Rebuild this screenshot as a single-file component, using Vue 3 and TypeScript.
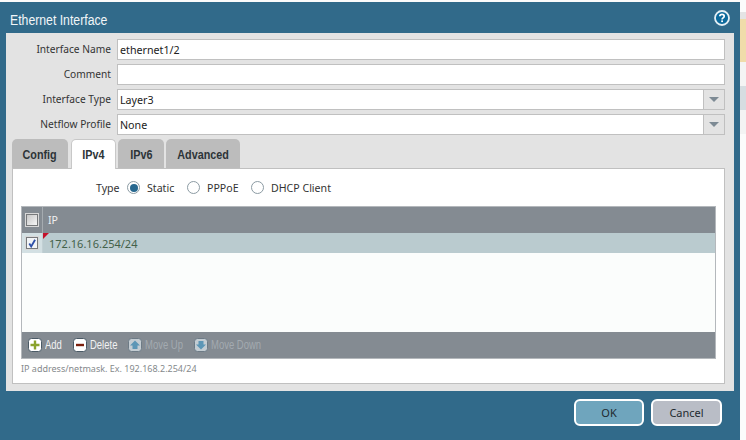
<script setup lang="ts">
const rows: { label: string; value: string; select?: boolean }[] = [
  { label: 'Interface Name', value: 'ethernet1/2' },
  { label: 'Comment', value: '' },
  { label: 'Interface Type', value: 'Layer3', select: true },
  { label: 'Netflow Profile', value: 'None', select: true },
]
const tabs = ['Config', 'IPv4', 'IPv6', 'Advanced']
const radios = ['Static', 'PPPoE', 'DHCP Client']
const strip = [
  { h: 12, c: '#fbfbfb' }, { h: 7, c: '#e4e4e4' }, { h: 43, c: '#f0dcaa' }, { h: 24, c: '#f4f4f4' },
  { h: 24, c: '#d6dde1' }, { h: 24, c: '#f3f3f3' }, { h: 306, c: '#fbfbfb' },
]
</script>

<template>
  <div class="page">
    <div class="left">
      <div class="topline"></div>
      <div class="dialog">
        <div class="header">
          <span class="title">Ethernet Interface</span>
          <svg class="help" width="16" height="16" viewBox="0 0 16 16">
            <circle cx="8" cy="8" r="7" fill="#0d6a9c" stroke="#e6f0f5" stroke-width="1.8" />
            <path d="M5.8 6.3C5.9 5 6.8 4.4 8 4.4c1.3 0 2.2.7 2.2 1.8 0 1.7-2.1 1.6-2.1 3.2" fill="none" stroke="#fff" stroke-width="1.7" />
            <rect x="7.2" y="10.4" width="1.8" height="1.7" fill="#fff" />
          </svg>
        </div>
        <div class="body">
          <div v-for="r in rows" :key="r.label" class="row">
            <label class="label">{{ r.label }}</label>
            <div class="input">
              <span class="value">{{ r.value }}</span>
              <span v-if="r.select" class="drop"><i class="arrow"></i></span>
            </div>
          </div>
          <div class="tabs">
            <div v-for="t in tabs" :key="t" class="tab" :class="{ active: t === 'IPv4' }"><span class="squeeze">{{ t }}</span></div>
          </div>
          <div class="panel">
            <div class="type-row">
              <span class="type-label">Type</span>
              <span v-for="(r, i) in radios" :key="r" class="radio-item">
                <i class="radio" :class="{ on: i === 0 }"></i>{{ r }}
              </span>
            </div>
            <div class="grid">
              <div class="grid-head">
                <div class="check-cell"><i class="box"></i></div>
                <div class="ip-head">IP</div>
              </div>
              <div class="grid-row">
                <div class="check-cell sel">
                  <i class="box checked">
                    <svg width="11" height="11" viewBox="0 0 11 11"><path d="M2.5 5.5L4.6 8.7 8.9 1.3" fill="none" stroke="#2d4fa8" stroke-width="2" /></svg>
                  </i>
                </div>
                <div class="ip-cell"><i class="flag"></i>172.16.16.254/24</div>
              </div>
              <div class="grid-empty"></div>
              <div class="toolbar">
                <span class="tool t1">
                  <svg class="ico" width="14" height="14" viewBox="0 0 14 14"><rect x=".5" y=".5" width="13" height="13" rx="3" fill="#fff" stroke="#4a5a66" /><path d="M7 2.5v9M2.5 7h9" stroke="#8aa32c" stroke-width="2.4" /></svg><span class="tool-text">Add</span>
                </span>
                <span class="tool t2">
                  <svg class="ico" width="14" height="14" viewBox="0 0 14 14"><rect x=".5" y=".5" width="13" height="13" rx="3" fill="#fff" stroke="#4a5a66" /><path d="M3 7h8" stroke="#7c1f0c" stroke-width="2.4" /></svg><span class="tool-text">Delete</span>
                </span>
                <span class="tool t3 off">
                  <svg class="ico" width="14" height="14" viewBox="0 0 14 14"><rect x=".5" y=".5" width="13" height="13" rx="3" fill="#c3ccd2" stroke="#6d7b86" /><path d="M7 2.5L12 7.5H9.5V11h-5V7.5H2z" fill="#5c96b6" /></svg><span class="tool-text">Move Up</span>
                </span>
                <span class="tool off">
                  <svg class="ico" width="14" height="14" viewBox="0 0 14 14"><rect x=".5" y=".5" width="13" height="13" rx="3" fill="#c3ccd2" stroke="#6d7b86" /><path d="M7 11.5L12 6.5H9.5V3h-5v3.5H2z" fill="#5c96b6" /></svg><span class="tool-text">Move Down</span>
                </span>
              </div>
            </div>
            <div class="hint">IP address/netmask. Ex. 192.168.2.254/24</div>
          </div>
        </div>
        <div class="footer">
          <button class="btn ok">OK</button>
          <button class="btn cancel">Cancel</button>
        </div>
      </div>
    </div>
    <div class="strip">
      <div v-for="(s, i) in strip" :key="i" :style="{ height: s.h + 'px', background: s.c }"></div>
    </div>
  </div>
</template>

<style>
html, body { margin: 0; padding: 0; background: #fbfbfb; }
</style>

<style scoped>
.page { display: flex; width: 746px; height: 440px; overflow: hidden; font-family: "Noto Sans", sans-serif; font-size: 11px; color: #333; }
.left { width: 740px; display: flex; flex-direction: column; }
.topline { height: 2px; background: #fbfbfb; flex: none; }
.dialog { flex: 1; background: #316a8a; display: flex; flex-direction: column; }
.strip { width: 6px; flex: none; }
.header { height: 31px; flex: none; display: flex; align-items: center; justify-content: space-between; padding: 0 3px 0 10px; box-sizing: border-box; }
.title { color: #f2f6f8; font: 14px "Liberation Sans", sans-serif; display: inline-block; transform: scaleX(.875); transform-origin: left center; padding-top: 4px; white-space: nowrap; }
.help { margin-right: 7px; }
.body { margin: 0 6px; width: 728px; height: 358px; box-sizing: border-box; background: #e3e3e3; padding: 6px 9px 7px 6px; display: flex; flex-direction: column; }
.row { display: flex; height: 21px; margin-bottom: 4px; flex: none; }
.label { width: 99px; text-align: right; line-height: 20px; margin-right: 6px; flex: none; font-size: 10.2px; }
.input { flex: 1; display: flex; border: 1px solid #c0c0c0; background: #fff; box-sizing: border-box; }
.value { flex: 1; padding-left: 2px; line-height: 20px; color: #222; font-size: 10.7px; }
.drop { width: 20px; flex: none; border-left: 1px solid #c0c0c0; background: #e3e3e3; display: flex; align-items: center; justify-content: center; }
.arrow { width: 0; height: 0; border-left: 5px solid transparent; border-right: 5px solid transparent; border-top: 5px solid #7d8a94; }
.tabs { display: flex; gap: 2px; height: 29px; flex: none; }
.tab { background: #bcbcbc; border-radius: 5px 5px 0 0; box-sizing: border-box; text-align: center; font: bold 13px/31px "Liberation Sans", sans-serif; color: #2d3438; }
.squeeze { display: inline-block; transform: scaleX(.83); white-space: nowrap; }
.tab:nth-child(1) { width: 56px; margin-right: 1px; }
.tab:nth-child(2) { width: 45px; }
.tab:nth-child(3) { width: 46px; }
.tab:nth-child(4) { width: 74px; }
.tab.active { background: #fff; border: 1px solid #c8c8c8; border-bottom: 0; height: 30px; z-index: 1; line-height: 30px; }
.panel { flex: 1; background: #fff; border: 1px solid #c0c0c0; padding: 0 8px; box-sizing: border-box; display: flex; flex-direction: column; font-size: 10.6px; }
.type-row { height: 37px; flex: none; display: flex; align-items: center; padding-left: 75px; }
.type-label { width: 31px; flex: none; }
.radio-item { display: flex; align-items: center; }
.radio-item:nth-of-type(2) { width: 60px; }
.radio-item:nth-of-type(3) { width: 64px; }
.radio { width: 13px; height: 13px; box-sizing: border-box; border: 1.5px solid #8c9ba3; border-radius: 50%; margin-right: 7px; background: #fff; display: block; position: relative; }
.radio.on::after { content: ""; position: absolute; inset: 1.5px; border-radius: 50%; background: #27688f; }
.grid { height: 153px; flex: none; box-sizing: border-box; border: 1px solid #b4b8bc; display: flex; flex-direction: column; }
.grid-head { height: 26px; background: #848b92; display: flex; flex: none; color: #f0f0f0; }
.check-cell { width: 20px; flex: none; display: flex; align-items: center; justify-content: center; border-right: 1px solid #a5abb0; }
.box { width: 10px; height: 10px; border: 1px solid #77797b; outline: 1px solid #d8d8d8; background: linear-gradient(135deg, #c6c6c6, #f6f6f6); display: flex; align-items: center; justify-content: center; }
.ip-head { padding-left: 5px; line-height: 27px; }
.grid-row { height: 20px; display: flex; flex: none; background: #bacbcf; }
.check-cell.sel { background: #d3e0e3; border-right: 1px solid #c2d0d4; }
.box.checked { background: #f2f4f6; }
.ip-cell { position: relative; padding-left: 6px; line-height: 21px; color: #44614a; font-size: 11px; }
.flag { position: absolute; left: 0; top: 0; width: 0; height: 0; border-top: 6px solid #c5102a; border-right: 6px solid transparent; }
.grid-empty { flex: 1; background: #fbfdfc; }
.toolbar { height: 26px; background: #848b92; flex: none; display: flex; align-items: center; padding-left: 6px; font: 12px "Liberation Sans", sans-serif; color: #f2f2f2; }
.tool { display: flex; align-items: center; width: 45px; flex: none; }
.t2 { width: 55px; }
.t3 { width: 66px; }
.tool-text { display: inline-block; transform: scaleX(.79); transform-origin: left center; white-space: nowrap; }
.tool.off { color: #a3aab0; }
.ico { margin-right: 3px; flex: none; }
.hint { color: #85898c; font-size: 9px; line-height: 12px; margin-top: 4px; }
.footer { flex: 1; display: flex; justify-content: flex-end; align-items: flex-start; gap: 7px; padding: 8px 18px 0 0; }
.btn { height: 27px; border: 2px solid #fff; border-radius: 6px; font: 11px "Noto Sans", sans-serif; color: #1e2a30; padding: 0; box-sizing: border-box; }
.ok { width: 70px; background: #6fa5bd; }
.cancel { width: 71px; background: #b9bdc6; }
</style>
